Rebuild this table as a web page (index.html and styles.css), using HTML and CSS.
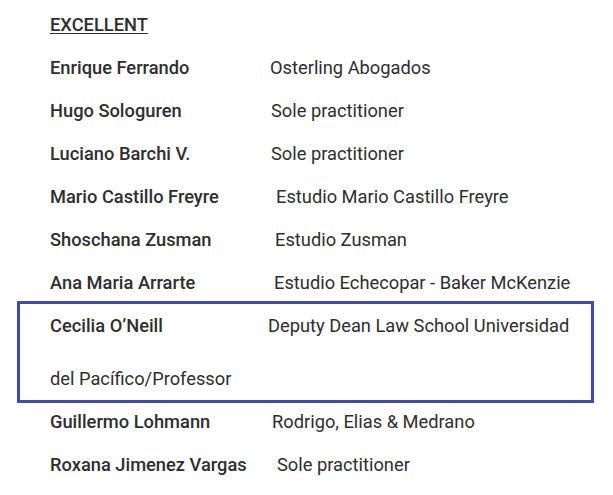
FILE: index.html
```html
<!DOCTYPE html>
<html>
<head>
<meta charset="utf-8">
<link rel="stylesheet" href="styles.css">
</head>
<body>
<div class="list">
  <div class="row heading"><span class="title">EXCELLENT</span></div>
  <div class="row"><span class="name">Enrique Ferrando</span><span class="firm off2">Osterling Abogados</span></div>
  <div class="row"><span class="name">Hugo Sologuren</span><span class="firm off3">Sole practitioner</span></div>
  <div class="row"><span class="name">Luciano Barchi V.</span><span class="firm off3">Sole practitioner</span></div>
  <div class="row"><span class="name">Mario Castillo Freyre</span><span class="firm off8">Estudio Mario Castillo Freyre</span></div>
  <div class="row"><span class="name">Shoschana Zusman</span><span class="firm off7">Estudio Zusman</span></div>
  <div class="row"><span class="name">Ana Maria Arrarte</span><span class="firm off6">Estudio Echecopar - Baker McKenzie</span></div>
  <div class="box">
    <div class="row"><span class="name">Cecilia O’Neill</span><span class="firm">Deputy Dean Law School Universidad</span></div>
    <div class="row cont"><span class="firm">del Pacífico/Professor</span></div>
  </div>
  <div class="row"><span class="name">Guillermo Lohmann</span><span class="firm off4">Rodrigo, Elias &amp; Medrano</span></div>
  <div class="row"><span class="name">Roxana Jimenez Vargas</span><span class="firm off9">Sole practitioner</span></div>
</div>
</body>
</html>
```

FILE: styles.css
```css
html, body {
  margin: 0;
  padding: 0;
  background: #ffffff;
}
body {
  font-family: Roboto, "Liberation Sans", sans-serif;
  font-size: 18.3px;
  color: #2e2e2e;
}
.list {
  padding: 3px 0 0 50px;
  display: flex;
  flex-direction: column;
}
.row {
  display: flex;
  height: 43px;
  line-height: 43px;
  white-space: nowrap;
}
.title {
  font-weight: 500;
  text-decoration: underline;
  text-underline-offset: 2px;
}
.name {
  font-weight: 500;
  width: 218px;
  flex: none;
}
.firm {
  font-weight: 400;
}
.off2 { padding-left: 2px; }
.off3 { padding-left: 3px; }
.off4 { padding-left: 4px; }
.off6 { padding-left: 6px; }
.off7 { padding-left: 7px; }
.off8 { padding-left: 8px; }
.off9 { padding-left: 9px; }
.box {
  margin: -3px 0 -3px -33px;
  border: 3px solid #4149b5;
  padding-left: 30px;
  box-sizing: content-box;
  width: 541px;
}
.box .row.cont {
  margin-top: 10px;
}
```
